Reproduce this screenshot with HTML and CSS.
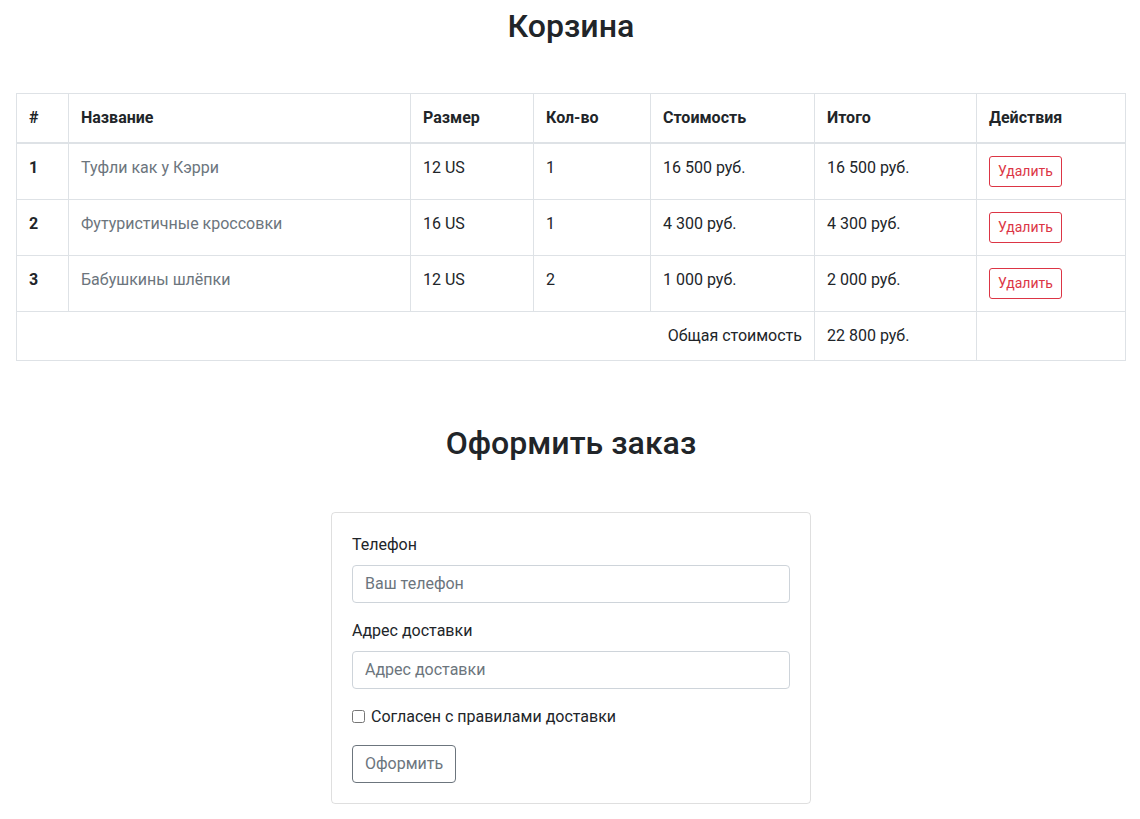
FILE: index.html
```html
<!DOCTYPE html>
<html lang="ru">
<head>
<meta charset="utf-8">
<title>Корзина</title>
<link rel="stylesheet" href="styles.css">
</head>
<body>
<div class="page">
  <h2 class="title title-cart">Корзина</h2>
  <table class="cart">
    <colgroup>
      <col class="c-num"><col class="c-name"><col class="c-size"><col class="c-qty"><col class="c-price"><col class="c-total"><col class="c-act">
    </colgroup>
    <thead>
      <tr><th>#</th><th>Название</th><th>Размер</th><th>Кол-во</th><th>Стоимость</th><th>Итого</th><th>Действия</th></tr>
    </thead>
    <tbody>
      <tr>
        <th>1</th><td><a class="name" href="#">Туфли как у Кэрри</a></td><td>12 US</td><td>1</td><td>16 500 руб.</td><td>16 500 руб.</td>
        <td><button class="btn-del" type="button">Удалить</button></td>
      </tr>
      <tr>
        <th>2</th><td><a class="name" href="#">Футуристичные кроссовки</a></td><td>16 US</td><td>1</td><td>4 300 руб.</td><td>4 300 руб.</td>
        <td><button class="btn-del" type="button">Удалить</button></td>
      </tr>
      <tr>
        <th>3</th><td><a class="name" href="#">Бабушкины шлёпки</a></td><td>12 US</td><td>2</td><td>1 000 руб.</td><td>2 000 руб.</td>
        <td><button class="btn-del" type="button">Удалить</button></td>
      </tr>
      <tr>
        <td colspan="5" class="sum-label">Общая стоимость</td><td>22 800 руб.</td><td></td>
      </tr>
    </tbody>
  </table>

  <h2 class="title title-order">Оформить заказ</h2>
  <div class="card">
    <form class="order-form">
      <div class="form-group">
        <label for="phone">Телефон</label>
        <input class="form-control" id="phone" placeholder="Ваш телефон">
      </div>
      <div class="form-group">
        <label for="address">Адрес доставки</label>
        <input class="form-control" id="address" placeholder="Адрес доставки">
      </div>
      <div class="form-group form-check">
        <input type="checkbox" id="agree" class="check">
        <label for="agree" class="check-label">Согласен с правилами доставки</label>
      </div>
      <button type="submit" class="btn-submit">Оформить</button>
    </form>
  </div>
</div>
</body>
</html>
```

FILE: styles.css
```css
* { box-sizing: border-box; }
html, body { margin: 0; padding: 0; }
body {
  font-family: Roboto, "Liberation Sans", sans-serif;
  font-size: 16px;
  line-height: 1.5;
  color: #212529;
  background: #fff;
}
.page {
  padding: 7px 14px 16px 16px;
}
.title {
  margin: 0;
  font-family: "Roboto Medium", Roboto, "Liberation Sans", sans-serif;
  font-size: 32px;
  font-weight: 500;
  line-height: 1.2;
  text-align: center;
}
.title-cart { margin-bottom: 48px; }
.title-order { margin-bottom: 49px; }

.cart {
  width: 1109px;
  border-collapse: collapse;
  table-layout: fixed;
  margin-bottom: 63px;
}
.c-num { width: 52px; }
.c-name { width: 342px; }
.c-size { width: 123px; }
.c-qty { width: 117px; }
.c-price { width: 164px; }
.c-total { width: 162px; }
.c-act { width: 149px; }
.cart th, .cart td {
  border: 1px solid #dee2e6;
  padding: 12px;
  text-align: left;
  vertical-align: top;
}
.cart th { font-weight: 700; }
.cart thead th {
  vertical-align: bottom;
  border-bottom: 2px solid #dee2e6;
}
.name {
  color: #6c757d;
  text-decoration: none;
}
.cart td.sum-label { text-align: right; }
.btn-del {
  display: inline-block;
  vertical-align: top;
  font-family: inherit;
  font-size: 14px;
  line-height: 21px;
  height: 31px;
  padding: 4px 8px;
  margin: 0;
  color: #dc3545;
  background: transparent;
  border: 1px solid #dc3545;
  border-radius: 3px;
  cursor: pointer;
}

.card {
  width: 480px;
  margin: 0 auto;
  border: 1px solid rgba(0,0,0,.125);
  border-radius: 4px;
  padding: 20px;
}
.form-group { margin-bottom: 16px; }
.form-group label {
  display: inline-block;
  margin-bottom: 8px;
}
.form-control {
  display: block;
  width: 100%;
  height: 38px;
  padding: 6px 12px;
  font-family: inherit;
  font-size: 16px;
  line-height: 1.5;
  color: #495057;
  background: #fff;
  border: 1px solid #ced4da;
  border-radius: 4px;
}
.form-control::placeholder { color: #6c757d; opacity: 1; }
.form-check {
  display: flex;
  align-items: center;
  gap: 6px;
}
.check {
  margin: 0;
  width: 13px;
  height: 13px;
}
.form-group .check-label { margin-bottom: 0; }
.btn-submit {
  font-family: inherit;
  font-size: 16px;
  line-height: 1.5;
  padding: 6px 12px;
  color: #6c757d;
  background: transparent;
  border: 1px solid #6c757d;
  border-radius: 4px;
  cursor: pointer;
}
```
